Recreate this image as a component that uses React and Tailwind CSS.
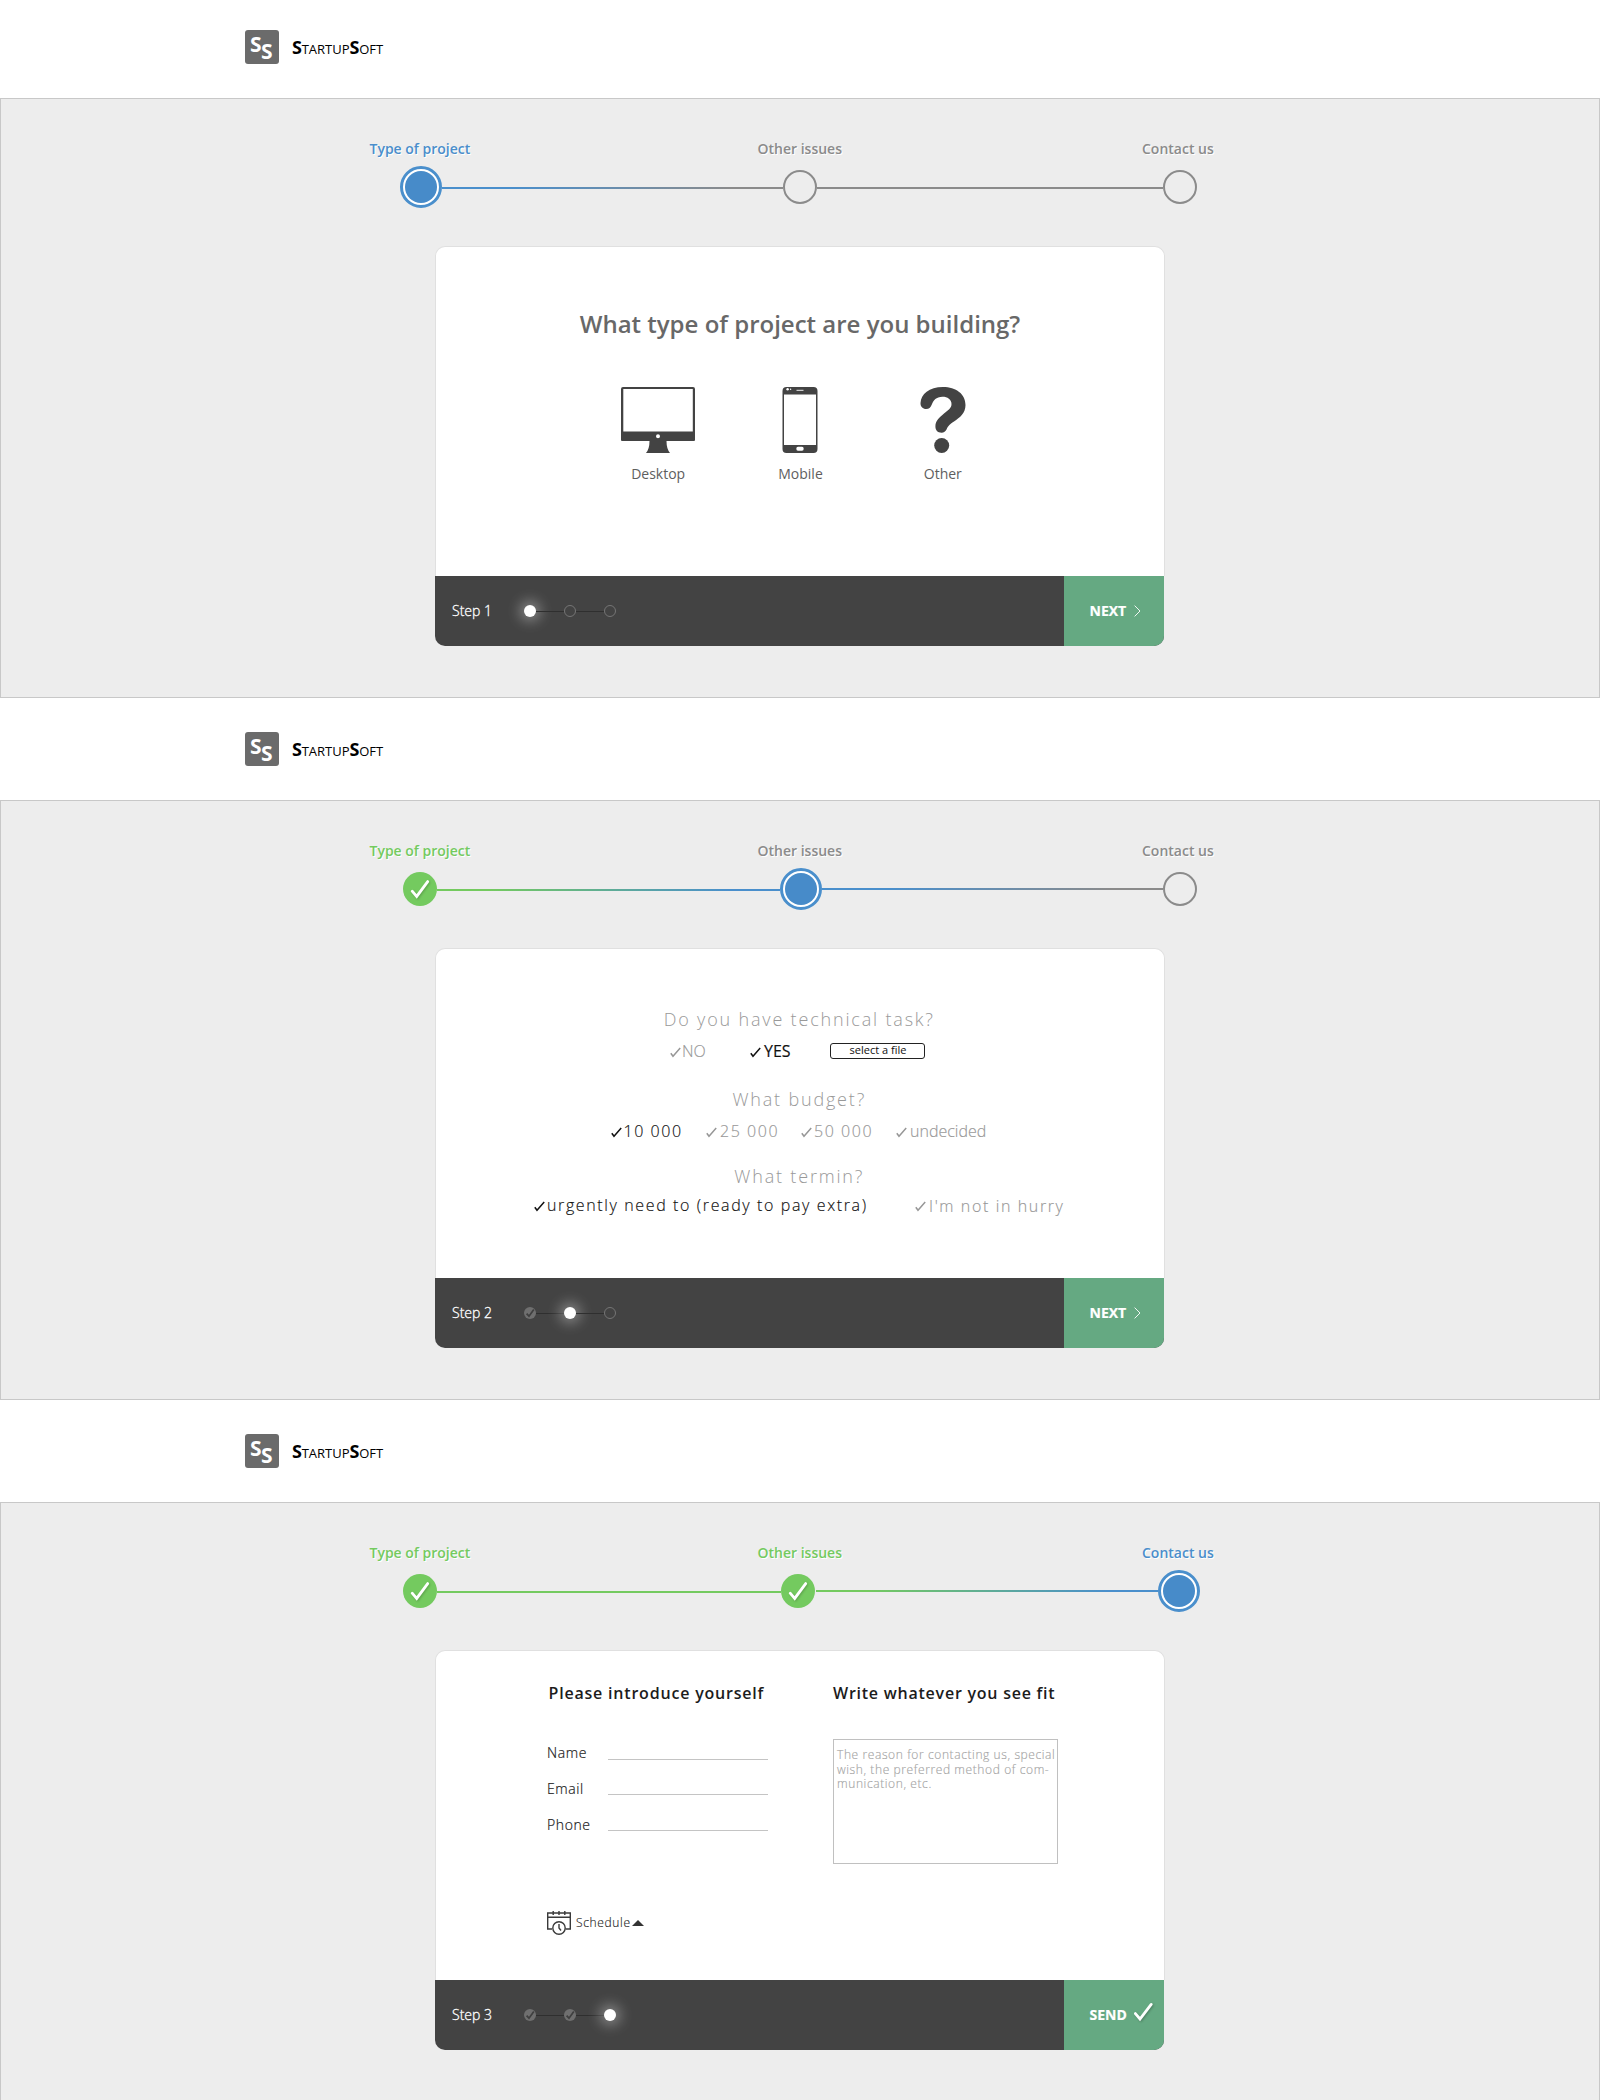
import React from "react";

function Logo() {
  return (
    <header className="flex h-[98px] items-start pl-[245px] pt-[30px]">
      <div className="flex h-[34px] w-[34px] rounded-[3px] bg-[#6b6b6b] pl-[5px] text-[21px] font-bold leading-[22px] text-white">
        <span className="mt-[3px] w-[11px]">S</span>
        <span className="mt-[10px]">S</span>
      </div>
      <div className="ml-[13px] mt-[5px] whitespace-nowrap text-[13px] leading-[24px] text-black">
        <span className="text-[18px] font-bold tracking-[-0.3px]">S</span>TARTUP<span className="text-[18px] font-bold tracking-[-0.3px]">S</span>OFT
      </div>
    </header>
  );
}

function BigCheck() {
  return (
    <svg viewBox="0 0 34 34" className="h-[34px] w-[34px] shrink-0 drop-shadow-[1px_1px_1px_rgba(0,0,0,0.2)]" fill="none">
      <path d="M9.2 19.2 13.7 24.4 24.7 9.6" stroke="#fff" strokeWidth="2.8" strokeLinecap="round" />
    </svg>
  );
}

function Node({ state, className = "" }) {
  if (state === "active")
    return (
      <div className={`h-[42px] w-[42px] shrink-0 rounded-full border-[3px] border-[#4a8fcc] bg-white p-[2px] ${className}`}>
        <div className="h-full w-full rounded-full bg-[#478bc9]" />
      </div>
    );
  if (state === "done")
    return (
      <div className={`h-[34px] w-[34px] shrink-0 rounded-full bg-[#74ca5f] ${className}`}>
        <BigCheck />
      </div>
    );
  return <div className={`h-[34px] w-[34px] shrink-0 rounded-full border-2 border-[#8b8b8b] ${className}`} />;
}

const labelColor = { active: "text-[#4a8ecb]", done: "text-[#74ca5f]", pending: "text-[#8b8b8b]" };

function Stepper({ labels, children }) {
  return (
    <div className="pt-[40px]">
      <div className="flex pl-[368.5px] text-[14px] font-semibold leading-[20px] [text-shadow:1px_1px_0_#fff]">
        <span className={`w-[388px] ${labelColor[labels[0]]}`}>Type of project</span>
        <span className={`w-[384.5px] ${labelColor[labels[1]]}`}>Other issues</span>
        <span className={labelColor[labels[2]]}>Contact us</span>
      </div>
      <div className="mt-[7px] flex h-[42px] items-center pl-[399px]">{children}</div>
    </div>
  );
}

function MiniDot({ state }) {
  if (state === "active")
    return <span className="h-3 w-3 rounded-full bg-white shadow-[0_0_14px_4px_rgba(255,255,255,0.4)]" />;
  if (state === "done")
    return (
      <span className="h-3 w-3 rounded-full bg-[#6f6f6f]">
        <svg viewBox="0 0 12 12" className="h-3 w-3" fill="none">
          <path d="M2.6 6.6 5 9.2 9.8 2.6" stroke="#3f3f3f" strokeWidth="1.7" />
        </svg>
      </span>
    );
  return <span className="h-3 w-3 rounded-full border border-[#757575]" />;
}

function Footer({ step, dots, action, icon }) {
  return (
    <footer className="flex h-[70px] w-[729px] overflow-hidden rounded-b-[10px] bg-[#434343] text-white">
      <div className="flex w-[629px] items-center pl-[17px]">
        <span className="w-[72px] text-[14px] font-light leading-[20px] [-webkit-text-stroke:0.3px_#fff]">Step {step}</span>
        <MiniDot state={dots[0]} />
        <span className="h-px w-7 bg-[#2f2f2f]" />
        <MiniDot state={dots[1]} />
        <span className="h-px w-7 bg-[#2f2f2f]" />
        <MiniDot state={dots[2]} />
      </div>
      <button className="flex w-[100px] items-center bg-[#65a982] pl-[25.5px] text-[14px] font-bold leading-[20px]">
        <span className="w-[44.5px] text-left [-webkit-text-stroke:0.2px_#fff]">{action}</span>
        {icon}
      </button>
    </footer>
  );
}

function Chevron() {
  return (
    <svg viewBox="0 0 7 12" className="h-3 w-[7px]" fill="none">
      <path d="M.6.6 6 6 .6 11.4" stroke="#fff" strokeWidth=".9" />
    </svg>
  );
}

function SendCheck() {
  return (
    <svg viewBox="0 0 20 20" className="-mt-[6px] h-5 w-5 drop-shadow-[1px_1px_1px_rgba(0,0,0,0.25)]" fill="none">
      <path d="M1.4 11.6 6 17 17.2 2.4" stroke="#fff" strokeWidth="2.8" strokeLinecap="round" />
    </svg>
  );
}

function Screen({ stepper, children, footer }) {
  return (
    <section className="h-[702px] shrink-0 bg-white">
      <Logo />
      <main className="h-[600px] border border-[#c8c8c8] bg-[#ededed]">
        {stepper}
        <div className="ml-[434px] mt-[38px] h-[400px] w-[730px]">
          <div className="h-[330px] rounded-t-[10px] border border-b-0 border-[#e0e0e0] bg-white">{children}</div>
          {footer}
        </div>
      </main>
    </section>
  );
}

function DesktopIcon() {
  return (
    <svg viewBox="0 0 74 66" className="h-[66px] w-[74px]">
      <path
        fillRule="evenodd"
        fill="#434343"
        d="M2 0H72Q74 0 74 2V53Q74 54 73 54H45.5Q45.5 62 49 66H25Q28.500 62 28.500 54H1Q0 54 0 53V2Q0 0 2 0ZM2.300 2V44.500H71.800V2ZM37 47.200a2 2 0 1 0 0 4a2 2 0 1 0 0-4Z"
      />
    </svg>
  );
}

function MobileIcon() {
  return (
    <svg viewBox="0 0 36 66" className="h-[66px] w-9">
      <path
        fillRule="evenodd"
        fill="#434343"
        d="M4.500 0H31.500Q35.500 0 35.500 4V62Q35.500 66 31.500 66H4.500Q.5 66 .5 62V4Q.5 0 4.500 0ZM2 7.500V58H34V7.500ZM16 59.800Q14.300 59.800 14.300 61.800Q14.300 63.800 16 63.800H20Q21.700 63.800 21.700 61.800Q21.700 59.800 20 59.800Z"
      />
      <path d="M14.500 3.300H21.500" stroke="#fff" strokeWidth=".9" />
      <circle cx="5.600" cy="2.300" r="1.200" fill="#fff" />
      <circle cx="8.600" cy="2.300" r=".7" fill="#fff" />
    </svg>
  );
}

function QuestionIcon() {
  return (
    <svg viewBox="0 0 46 66" className="h-[66px] w-[46px]" fill="#434343">
      <path d="M.5 16C1 7 9 0 23 0C36 0 45.500 7 45.500 18C45.500 26 40 30.500 34 34.500C28 38.500 28 39.500 26.500 42.500C25.500 44.500 24 45.700 21.500 45.700C17.500 45.700 15.400 43 15.400 39.500C15.400 34 18.500 31 24 26.500C28.500 23 31.500 21 31.500 17C31.500 12.500 27.500 9.800 22.500 9.800C16 9.800 13.500 13.500 11.800 17.500C10.600 20.500 9 22 6.200 22C2.800 22 .3 19.500 .5 16Z" />
      <circle cx="21.700" cy="58.500" r="7.500" />
    </svg>
  );
}

function ProjectStep() {
  const kinds = [
    ["Desktop", <DesktopIcon />],
    ["Mobile", <MobileIcon />],
    ["Other", <QuestionIcon />],
  ];
  return (
    <div className="flex flex-col items-center pt-[61px]">
      <h1 className="text-[24px] font-semibold leading-[32px] text-[#686868]">What type of project are you building?</h1>
      <div className="ml-[1px] mt-[47px] grid w-[427px] grid-cols-3">
        {kinds.map(([name, icon]) => (
          <div key={name} className="flex flex-col items-center text-[14px] leading-[20px] text-[#5e5e5e]">
            {icon}
            <span className="mt-[11px]">{name}</span>
          </div>
        ))}
      </div>
    </div>
  );
}

function Option({ on, className = "", textClass, children }) {
  return (
    <div
      className={`flex shrink-0 items-center whitespace-nowrap [-webkit-text-stroke:0.15px_currentColor] ${on ? "text-[#111]" : "text-[#979797]"} ${className}`}
    >
      <svg viewBox="0 0 11 11" className="mt-[2px] h-[11px] w-[11px] shrink-0" fill="none">
        <path d="M.8 6.200 3 9.300 10.200 1" stroke="currentColor" strokeWidth="1.500" />
      </svg>
      <span className={textClass}>{children}</span>
    </div>
  );
}

function IssuesStep() {
  const h = "pr-[1.5px] text-center text-[18px] font-light leading-[24px] tracking-[1.82px] text-[#999]";
  return (
    <div className="pt-[58px] font-light">
      <h2 className={h}>Do you have technical task?</h2>
      <div className="mt-2 flex h-6 items-center pl-[234px] text-[16px] leading-[24px]">
        <Option className="w-[80px]" textClass="ml-[1px]">NO</Option>
        <Option on className="w-[80px]" textClass="ml-[3px] font-normal">YES</Option>
        <button className="h-4 w-[95px] rounded-[3px] border border-[#222] pl-[1px] text-[11px] font-normal leading-[12px] text-[#111]">
          <span className="relative -top-px">select a file</span>
        </button>
      </div>
      <h2 className={`mt-6 ${h}`}>What budget?</h2>
      <div className="mt-2 flex pl-[175px] text-[16px] leading-[24px]">
        <Option on className="w-[95px]" textClass="ml-[1.5px] tracking-[1.55px]">10 000</Option>
        <Option className="w-[95px]" textClass="ml-[3px] tracking-[1.55px]">25 000</Option>
        <Option className="w-[95px]" textClass="ml-[2px] tracking-[1.55px]">50 000</Option>
        <Option textClass="ml-[3px]">undecided</Option>
      </div>
      <h2 className={`mt-[21px] ${h}`}>What termin?</h2>
      <div className="mt-[4px] flex pl-[98px] text-[16px] leading-[24px]">
        <Option on className="w-[381px]" textClass="ml-[2px] tracking-[1.62px]">urgently need to (ready to pay extra)</Option>
        <Option textClass="ml-[3px] mt-[2px] tracking-[1.62px]">I'm not in hurry</Option>
      </div>
    </div>
  );
}

function ScheduleIcon() {
  return (
    <svg viewBox="0 0 24 24" className="h-6 w-6" fill="none" stroke="#3a3a3a" strokeWidth="1.400">
      <path d="M5 18H.7V2H23.300V18H18.500M.7 6.300H23.300M6.200 0V4M12 0V4M17.800 0V4" />
      <circle cx="12" cy="17" r="6.200" />
      <path d="M12 13V17L14 19.500" />
    </svg>
  );
}

function Field({ name, line }) {
  return (
    <label className="flex h-9 items-start">
      <span className="w-[61px]">{name}</span>
      <span className={`w-[160px] border-b border-[#c4c4c4] ${line}`} />
    </label>
  );
}

function ContactStep() {
  return (
    <div className="flex pt-[30px] text-[#1c1c1c]">
      <div className="w-[286px] pl-[111px]">
        <div className="w-[222px]">
          <h2 className="ml-[1.5px] whitespace-nowrap text-[16px] font-semibold leading-[24px] tracking-[0.8px]">Please introduce yourself</h2>
          <div className="mt-[38px] text-[14px] font-light leading-[20px] tracking-[0.6px] [-webkit-text-stroke:0.2px_currentColor]">
            <Field name="Name" line="h-[17px]" />
            <Field name="Email" line="h-[16px]" />
            <Field name="Phone" line="h-[16px]" />
          </div>
          <div className="mt-[60px] flex items-center text-[12px] font-light leading-[20px] tracking-[0.65px] [-webkit-text-stroke:0.15px_currentColor]">
            <ScheduleIcon />
            <span className="ml-[5px]">Schedule</span>
            <svg viewBox="0 0 12 6" className="ml-[1px] h-[6px] w-3">
              <path d="M0 6 6 0 12 6Z" fill="#333" />
            </svg>
          </div>
        </div>
      </div>
      <div className="ml-[111px] w-[225px]">
        <h2 className="whitespace-nowrap text-[16px] font-semibold leading-[24px] tracking-[0.76px]">Write whatever you see fit</h2>
        <div className="mt-[34px] h-[125px] whitespace-nowrap border border-[#c0c0c0] pl-[3px] pt-[8px] text-[12px] font-light leading-[14.5px] tracking-[0.6px] text-[#a4a4a4] [-webkit-text-stroke:0.15px_currentColor]">
          The reason for contacting us, special<br />wish, the preferred method of com-<br />munication, etc.
        </div>
      </div>
    </div>
  );
}

export default function App() {
  return (
    <div className="flex h-[2100px] w-[1600px] flex-col overflow-hidden bg-white font-['Open_Sans',sans-serif]">
      <Screen
        stepper={
          <Stepper labels={["active", "pending", "pending"]}>
            <Node state="active" />
            <span className="mt-[2px] h-[2px] w-[341px] bg-[linear-gradient(90deg,#4a8fcc_20%,#8b8b8b_85%)]" />
            <Node state="pending" />
            <span className="mt-[2px] h-[2px] w-[346px] bg-[#8b8b8b]" />
            <Node state="pending" />
          </Stepper>
        }
        footer={<Footer step="1" dots={["active", "pending", "pending"]} action="NEXT" icon={<Chevron />} />}
      >
        <ProjectStep />
      </Screen>
      <Screen
        stepper={
          <Stepper labels={["done", "pending", "pending"]}>
            <Node state="done" className="ml-[3px]" />
            <span className="mt-[2px] h-[2px] w-[343px] bg-[linear-gradient(90deg,#74ca5f_15%,#4a8fcc_85%)]" />
            <Node state="active" />
            <span className="h-[2px] w-[341px] bg-[linear-gradient(90deg,#4a8fcc_20%,#8b8b8b_85%)]" />
            <Node state="pending" />
          </Stepper>
        }
        footer={<Footer step="2" dots={["done", "active", "pending"]} action="NEXT" icon={<Chevron />} />}
      >
        <IssuesStep />
      </Screen>
      <Screen
        stepper={
          <Stepper labels={["done", "done", "active"]}>
            <Node state="done" className="ml-[3px]" />
            <span className="mt-[2px] h-[2px] w-[344px] bg-[#74ca5f]" />
            <Node state="done" />
            <span className="ml-[1px] h-[2px] w-[342px] bg-[linear-gradient(90deg,#74ca5f_15%,#4a8fcc_85%)]" />
            <Node state="active" />
          </Stepper>
        }
        footer={<Footer step="3" dots={["done", "done", "active"]} action="SEND" icon={<SendCheck />} />}
      >
        <ContactStep />
      </Screen>
    </div>
  );
}
